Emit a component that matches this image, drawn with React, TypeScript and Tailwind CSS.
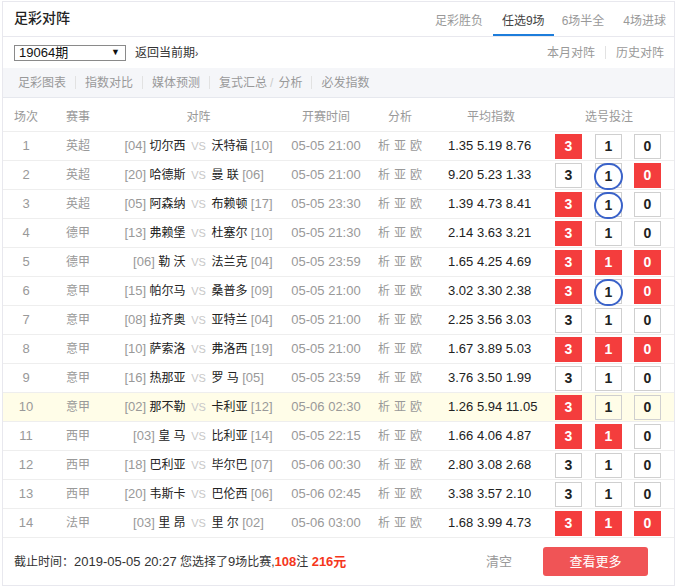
import React from "react";

type Match = {
  no: number;
  league: string;
  homeRank: string;
  home: string;
  away: string;
  awayRank: string;
  time: string;
  odds: string[];
  picks: number[]; // 0 = empty, 1 = red, 2 = circled
};

const matches: Match[] = [
  { no: 1, league: "英超", homeRank: "04", home: "切尔西", away: "沃特福", awayRank: "10", time: "05-05 21:00", odds: ["1.35", "5.19", "8.76"], picks: [1, 0, 0] },
  { no: 2, league: "英超", homeRank: "20", home: "哈德斯", away: "曼 联", awayRank: "06", time: "05-05 21:00", odds: ["9.20", "5.23", "1.33"], picks: [0, 2, 1] },
  { no: 3, league: "英超", homeRank: "05", home: "阿森纳", away: "布赖顿", awayRank: "17", time: "05-05 23:30", odds: ["1.39", "4.73", "8.41"], picks: [1, 2, 0] },
  { no: 4, league: "德甲", homeRank: "13", home: "弗赖堡", away: "杜塞尔", awayRank: "10", time: "05-05 21:30", odds: ["2.14", "3.63", "3.21"], picks: [1, 0, 0] },
  { no: 5, league: "德甲", homeRank: "06", home: "勒 沃", away: "法兰克", awayRank: "04", time: "05-05 23:59", odds: ["1.65", "4.25", "4.69"], picks: [1, 1, 1] },
  { no: 6, league: "意甲", homeRank: "15", home: "帕尔马", away: "桑普多", awayRank: "09", time: "05-05 21:00", odds: ["3.02", "3.30", "2.38"], picks: [1, 2, 1] },
  { no: 7, league: "意甲", homeRank: "08", home: "拉齐奥", away: "亚特兰", awayRank: "04", time: "05-05 21:00", odds: ["2.25", "3.56", "3.03"], picks: [0, 0, 0] },
  { no: 8, league: "意甲", homeRank: "10", home: "萨索洛", away: "弗洛西", awayRank: "19", time: "05-05 21:00", odds: ["1.67", "3.89", "5.03"], picks: [1, 1, 1] },
  { no: 9, league: "意甲", homeRank: "16", home: "热那亚", away: "罗 马", awayRank: "05", time: "05-05 23:59", odds: ["3.76", "3.50", "1.99"], picks: [0, 0, 0] },
  { no: 10, league: "意甲", homeRank: "02", home: "那不勒", away: "卡利亚", awayRank: "12", time: "05-06 02:30", odds: ["1.26", "5.94", "11.05"], picks: [1, 0, 0] },
  { no: 11, league: "西甲", homeRank: "03", home: "皇 马", away: "比利亚", awayRank: "14", time: "05-05 22:15", odds: ["1.66", "4.06", "4.87"], picks: [1, 1, 0] },
  { no: 12, league: "西甲", homeRank: "18", home: "巴利亚", away: "毕尔巴", awayRank: "07", time: "05-06 00:30", odds: ["2.80", "3.08", "2.68"], picks: [0, 0, 0] },
  { no: 13, league: "西甲", homeRank: "20", home: "韦斯卡", away: "巴伦西", awayRank: "06", time: "05-06 02:45", odds: ["3.38", "3.57", "2.10"], picks: [0, 0, 0] },
  { no: 14, league: "法甲", homeRank: "03", home: "里 昂", away: "里 尔", awayRank: "02", time: "05-06 03:00", odds: ["1.68", "3.99", "4.73"], picks: [1, 1, 1] },
];

function PickBox({ label, state, className }: { label: string; state: number; className: string }) {
  if (state === 1) {
    return (
      <div className={`w-[27px] h-[25px] flex items-center justify-center bg-[#f43d3d] text-white text-[14px] font-bold ${className}`}>
        {label}
      </div>
    );
  }
  return (
    <div className={`relative w-[27px] h-[25px] flex items-center justify-center border border-[#cfcfcf] text-[#222] text-[14px] font-bold ${className}`}>
      {label}
      {state === 2 && (
        <div className="absolute -left-[2px] -top-[1px] w-[29px] h-[27px] rounded-full border-2 border-[#3a62c9] bg-white flex items-center justify-center">
          {label}
        </div>
      )}
    </div>
  );
}

function Divider() {
  return <div className="w-px h-[13px] bg-[#e2e2e2]" />;
}

export default function App() {
  return (
    <div className="ml-[2px] mt-[1px] w-[673px] border border-[#e8e8ee] bg-white font-['Liberation_Sans','Noto_Sans_CJK_SC',sans-serif] text-[12px] text-[#333]">
      {/* title + tabs */}
      <div className="flex items-end justify-between h-[35px] border-b border-[#e8e8ee]">
        <div className="self-center pl-[11px] -mt-[2px] text-[14px] font-medium text-[#222]">足彩对阵</div>
        <div className="flex text-[12px] text-[#999]">
          <div className="pl-2 pr-[10px] pb-[6px]">足彩胜负</div>
          <div className="px-[9px] pb-[4px] border-b-2 border-[#1d7ddb] text-[#444]">任选9场</div>
          <div className="px-2 pb-[6px]">6场半全</div>
          <div className="px-2 pb-[6px] ml-[3px]">4场进球</div>
        </div>
      </div>

      {/* period row */}
      <div className="flex items-center justify-between h-[31px] pl-[11px] pr-[10px]">
        <div className="flex items-center">
          <div className="w-[112px] h-[16px] border border-[#8a8a8a] flex items-center justify-between pl-[4px] pr-[5px] text-[13px] text-[#111] leading-none">
            <span>19064期</span>
            <span className="text-[9px]">▼</span>
          </div>
          <div className="ml-[9px] text-[#333]">返回当前期<span className="text-[10px]">›</span></div>
        </div>
        <div className="flex items-center text-[#999]">
          <span>本月对阵</span>
          <div className="mx-[10px]"><Divider /></div>
          <span>历史对阵</span>
        </div>
      </div>

      {/* sub nav */}
      <div className="flex items-center h-[30px] bg-[#f5f6f9] border-b border-[#e6e8ee] pl-[15px] text-[#999]">
        <span>足彩图表</span>
        <div className="mx-[9px]"><Divider /></div>
        <span>指数对比</span>
        <div className="mx-[9px]"><Divider /></div>
        <span>媒体预测</span>
        <div className="mx-[9px]"><Divider /></div>
        <span>复式汇总</span>
        <span className="ml-[3px] mr-[5px] text-[#ccc]">/</span>
        <span>分析</span>
        <div className="mx-[9px]"><Divider /></div>
        <span>必发指数</span>
      </div>

      {/* table header */}
      <div className="flex items-center h-[29px] mt-[5px] border-b border-[#eeeeee] text-[#999]">
        <div className="w-[46px] text-center">场次</div>
        <div className="w-[58px] text-center">赛事</div>
        <div className="w-[183px] text-center">对阵</div>
        <div className="w-[72px] text-center">开赛时间</div>
        <div className="w-[76px] text-center">分析</div>
        <div className="w-[106px] text-center">平均指数</div>
        <div className="flex-1 text-center">选号投注</div>
      </div>

      {matches.map((m) => (
        <div
          key={m.no}
          className={`flex items-center h-[29px] border-b border-[#eeeeee] ${m.no === 10 ? "bg-[#fffde8]" : ""}`}
        >
          <div className="w-[46px] text-center text-[13px] text-[#999]">{m.no}</div>
          <div className="w-[58px] text-center text-[#999]">{m.league}</div>
          <div className="w-[183px] flex items-center">
            <div className="flex-1 text-right">
              <span className="text-[13px] text-[#999]">[{m.homeRank}]</span> <span className="text-[#222]">{m.home}</span>
            </div>
            <div className="w-[26px] text-center text-[11px] text-[#c8c8c8]">VS</div>
            <div className="flex-1 text-left">
              <span className="text-[#222]">{m.away}</span> <span className="text-[13px] text-[#999]">[{m.awayRank}]</span>
            </div>
          </div>
          <div className="w-[72px] text-center text-[13px] text-[#999]">{m.time}</div>
          <div className="w-[76px] flex justify-center gap-[4px] text-[#999]">
            <span>析</span>
            <span>亚</span>
            <span>欧</span>
          </div>
          <div className="w-[106px] pl-[10px] text-[13px] text-[#222] whitespace-nowrap">{m.odds.join(" ")}</div>
          <div className="flex-1 flex items-center">
            <PickBox label="3" state={m.picks[0]} className="ml-[11px]" />
            <PickBox label="1" state={m.picks[1]} className="ml-[13px]" />
            <PickBox label="0" state={m.picks[2]} className="ml-[12px]" />
          </div>
        </div>
      ))}

      {/* footer */}
      <div className="flex items-center justify-between h-[47px] pl-[11px] pr-[26px]">
        <div className="text-[#333]">
          截止时间：<span className="text-[13px]">2019-05-05 20:27</span> 您选择了<span className="text-[13px]">9</span>场比赛,
          <span className="text-[13px] font-bold text-[#f5361b]">108</span>注{" "}
          <span className="text-[13px] font-bold text-[#f5361b]">216元</span>
        </div>
        <div className="flex items-center">
          <span className="text-[13px] text-[#999]">清空</span>
          <div className="ml-[31px] w-[105px] h-[29px] rounded-[3px] bg-[#f05456] text-white text-[13px] flex items-center justify-center">
            查看更多
          </div>
        </div>
      </div>
    </div>
  );
}
